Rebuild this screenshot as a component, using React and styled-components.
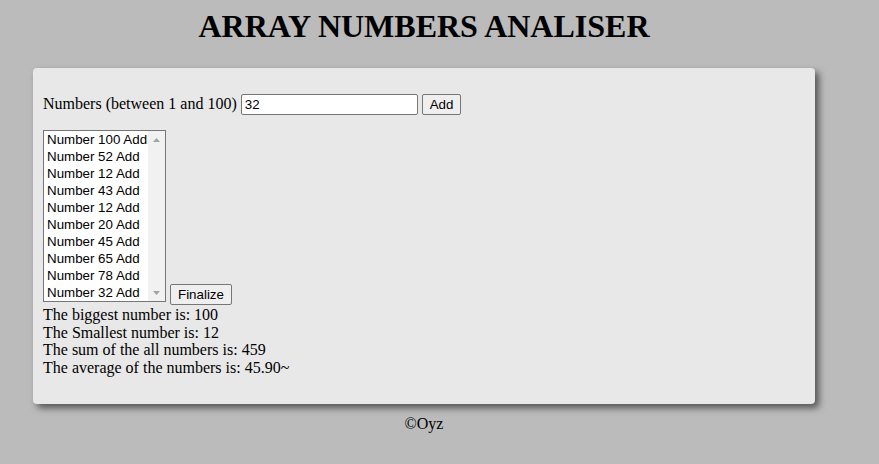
import styled, { createGlobalStyle } from 'styled-components';

const Global = createGlobalStyle`
  html, body {
    margin: 0;
    background: #bbbbbb;
    font-family: "Liberation Serif", "Times New Roman", serif;
    font-size: 16px;
    color: #000;
  }
`
const Main = styled.main`
  width: 782px;
  margin-left: 33px;
`
const Title = styled.h1`
  margin: 8px 0 23px;
  font-size: 32px;
  line-height: 37px;
  font-weight: bold;
  text-align: center;
`
const Panel = styled.section`
  background: #e8e8e8;
  border-radius: 4px;
  box-shadow: 4px 4px 7px rgba(0, 0, 0, 0.55);
  padding: 25px 10px 28px;
`
const InputRow = styled.div`
  display: flex;
  align-items: center;
  gap: 4px;
  height: 22px;
  margin-bottom: 15px;
`
const Label = styled.label`
  line-height: 18px;
`
const Field = styled.input`
  box-sizing: border-box;
  width: 177px;
  height: 21px;
  padding: 1px 3px;
  border: 1px solid #767676;
  border-radius: 2px;
  background: #fff;
  font: 13.33px "Liberation Sans", Arial, sans-serif;
  color: #000;
  outline: none;
`
const Button = styled.button`
  box-sizing: border-box;
  height: 21px;
  padding: 0 7px;
  border: 1px solid #767676;
  border-radius: 2px;
  background: #efefef;
  font: 13.33px "Liberation Sans", Arial, sans-serif;
  color: #000;
  cursor: pointer;
`
const ListRow = styled.div`
  display: flex;
  align-items: flex-end;
  gap: 4px;
`
const ListBox = styled.div`
  box-sizing: border-box;
  width: 123px;
  height: 172px;
  margin-bottom: 3px;
  border: 1px solid #767676;
  background: #fff;
  display: flex;
`
const Items = styled.ul`
  flex: 1;
  margin: 0;
  padding: 0;
  list-style: none;
`
const Item = styled.li`
  height: 17px;
  padding-left: 3px;
  font: 13.33px/17px "Liberation Sans", Arial, sans-serif;
  white-space: nowrap;
`
const Scrollbar = styled.div`
  width: 17px;
  background: #f1f1f1;
  display: flex;
  flex-direction: column;
  justify-content: space-between;
`
const Arrow = styled.div`
  height: 17px;
  display: flex;
  align-items: center;
  justify-content: center;
`
const Results = styled.div`
  padding-top: 1px;
  line-height: 17.5px;
`
const Footer = styled.footer`
  margin-top: 11px;
  text-align: center;
  line-height: 18px;
`

const numbers = [100, 52, 12, 43, 12, 20, 45, 65, 78, 32];

function App() {
  const sum = numbers.reduce((a, b) => a + b, 0);
  return (
    <>
      <Global />
      <Main>
        <Title>ARRAY NUMBERS ANALISER</Title>
        <Panel>
          <InputRow>
            <Label htmlFor="num">Numbers (between 1 and 100)</Label>
            <Field id="num" type="number" defaultValue="32" />
            <Button>Add</Button>
          </InputRow>
          <ListRow>
            <ListBox>
              <Items>
                {numbers.map((n, i) => <Item key={i}>Number {n} Add</Item>)}
              </Items>
              <Scrollbar>
                <Arrow>
                  <svg width="7" height="4" viewBox="0 0 7 4"><path d="M0 4 L3.5 0 L7 4 Z" fill="#a3a3a3" /></svg>
                </Arrow>
                <Arrow>
                  <svg width="7" height="4" viewBox="0 0 7 4"><path d="M0 0 L3.5 4 L7 0 Z" fill="#a3a3a3" /></svg>
                </Arrow>
              </Scrollbar>
            </ListBox>
            <Button>Finalize</Button>
          </ListRow>
          <Results>
            <div>The biggest number is: {Math.max(...numbers)}</div>
            <div>The Smallest number is: {Math.min(...numbers)}</div>
            <div>The sum of the all numbers is: {sum}</div>
            <div>The average of the numbers is: {(sum / numbers.length).toFixed(2)}~</div>
          </Results>
        </Panel>
        <Footer>©Oyz</Footer>
      </Main>
    </>
  );
}

export default App;
